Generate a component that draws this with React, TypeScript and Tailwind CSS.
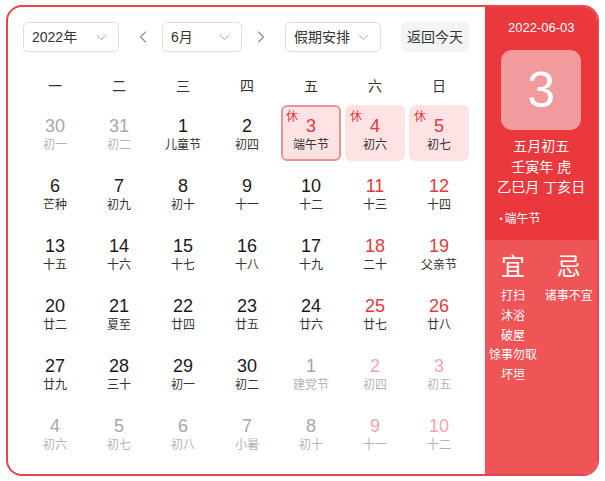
import { ChevronDown, ChevronLeft, ChevronRight } from "lucide-react";

type Day = {
  day: number;
  lunar: string;
  other?: boolean;
  rest?: boolean;
  selected?: boolean;
};

const days: Day[] = [
  { day: 30, lunar: "初一", other: true },
  { day: 31, lunar: "初二", other: true },
  { day: 1, lunar: "儿童节" },
  { day: 2, lunar: "初四" },
  { day: 3, lunar: "端午节", rest: true, selected: true },
  { day: 4, lunar: "初六", rest: true },
  { day: 5, lunar: "初七", rest: true },
  { day: 6, lunar: "芒种" },
  { day: 7, lunar: "初九" },
  { day: 8, lunar: "初十" },
  { day: 9, lunar: "十一" },
  { day: 10, lunar: "十二" },
  { day: 11, lunar: "十三" },
  { day: 12, lunar: "十四" },
  { day: 13, lunar: "十五" },
  { day: 14, lunar: "十六" },
  { day: 15, lunar: "十七" },
  { day: 16, lunar: "十八" },
  { day: 17, lunar: "十九" },
  { day: 18, lunar: "二十" },
  { day: 19, lunar: "父亲节" },
  { day: 20, lunar: "廿二" },
  { day: 21, lunar: "夏至" },
  { day: 22, lunar: "廿四" },
  { day: 23, lunar: "廿五" },
  { day: 24, lunar: "廿六" },
  { day: 25, lunar: "廿七" },
  { day: 26, lunar: "廿八" },
  { day: 27, lunar: "廿九" },
  { day: 28, lunar: "三十" },
  { day: 29, lunar: "初一" },
  { day: 30, lunar: "初二" },
  { day: 1, lunar: "建党节", other: true },
  { day: 2, lunar: "初四", other: true },
  { day: 3, lunar: "初五", other: true },
  { day: 4, lunar: "初六", other: true },
  { day: 5, lunar: "初七", other: true },
  { day: 6, lunar: "初八", other: true },
  { day: 7, lunar: "小暑", other: true },
  { day: 8, lunar: "初十", other: true },
  { day: 9, lunar: "十一", other: true },
  { day: 10, lunar: "十二", other: true },
];

const weekdays = ["一", "二", "三", "四", "五", "六", "日"];

const good = ["打扫", "沐浴", "破屋", "馀事勿取", "坏垣"];

function Select({ label, width }: { label: string; width: string }) {
  return (
    <div
      className={`flex h-[30px] items-center justify-between rounded-[5px] border border-[#dcdfe6] bg-white pl-[8px] pr-[8px] text-[14px] text-[#333] ${width}`}
    >
      <span>{label}</span>
      <ChevronDown size={17} strokeWidth={1.4} color="#a0a4ab" />
    </div>
  );
}

function DayCell({ item, index }: { item: Day; index: number }) {
  const weekend = index % 7 >= 5;
  let numColor = "text-[#1a1a1a]";
  let lunarColor = "text-[#333]";
  if (item.other) {
    numColor = weekend ? "text-[#f2a6ac]" : "text-[#a8a8a8]";
    lunarColor = "text-[#b4b4b4]";
  } else if (weekend || item.rest) {
    numColor = "text-[#e33a3e]";
  }

  let box = "border-2 border-transparent";
  if (item.selected) box = "border-2 border-[#ee9294] bg-[#fde3e4]";
  else if (item.rest) box = "border-2 border-transparent bg-[#fde3e4]";

  return (
    <div
      className={`relative mx-[2px] flex h-[56px] flex-col items-center rounded-[6px] pt-[8px] ${box}`}
    >
      {item.rest && (
        <span className="absolute left-[3px] top-[2px] text-[12px] leading-[16px] text-[#e33a3e]">
          休
        </span>
      )}
      <span className={`text-[18px] leading-[22px] ${numColor}`}>{item.day}</span>
      <span className={`text-[12px] leading-[16px] ${lunarColor}`}>{item.lunar}</span>
    </div>
  );
}

export default function App() {
  return (
    <div
      className="pl-[6px] pt-[5px]"
      style={{ fontFamily: '"Liberation Sans", "Noto Sans CJK SC", sans-serif' }}
    >
      <div className="flex h-[471px] w-[593px] overflow-hidden rounded-[16px] border-2 border-[#e2474b] bg-white">
        <div className="w-[479px] pl-[15px] pt-[15px]">
          <div className="flex h-[30px] items-center">
            <Select label="2022年" width="w-[96px]" />
            <div className="ml-[12px] mr-[7px] flex w-[24px] justify-center">
              <ChevronLeft size={20} strokeWidth={1.4} color="#8a8e96" />
            </div>
            <Select label="6月" width="w-[80px]" />
            <div className="ml-[7px] mr-[12px] flex w-[24px] justify-center">
              <ChevronRight size={20} strokeWidth={1.4} color="#8a8e96" />
            </div>
            <Select label="假期安排" width="w-[96px]" />
            <button className="ml-[20px] h-[30px] w-[68px] rounded-[5px] bg-[#f3f4f6] text-[14px] text-[#333]">
              返回今天
            </button>
          </div>

          <div className="mt-[17px] grid h-[34px] w-[448px] grid-cols-7 items-center">
            {weekdays.map((w) => (
              <div key={w} className="text-center text-[14px] text-[#333]">
                {w}
              </div>
            ))}
          </div>

          <div className="mt-[2px] grid w-[448px] grid-cols-7 gap-y-[4px]">
            {days.map((d, i) => (
              <DayCell key={i} item={d} index={i} />
            ))}
          </div>
        </div>

        <div className="flex w-[112px] flex-col text-white">
          <div className="flex h-[233px] flex-col items-center bg-[#ea383c] pt-[12px]">
            <div className="text-[13px] leading-[18px]">2022-06-03</div>
            <div className="mt-[13px] flex h-[80px] w-[80px] items-center justify-center rounded-[11px] bg-[#f29b9c] text-[50px] leading-none">
              3
            </div>
            <div className="mt-[6px] text-[14px] leading-[20.5px]">五月初五</div>
            <div className="text-[14px] leading-[20.5px]">壬寅年 虎</div>
            <div className="text-[14px] leading-[20.5px]">乙巳月 丁亥日</div>
            <div className="mt-[13px] flex w-full items-center gap-[2px] pl-[14px] text-[12px] leading-[16px]">
              <span className="text-[9px]">•</span>
              <span>端午节</span>
            </div>
          </div>
          <div className="flex flex-1 bg-[#ef5457] pt-[12px]">
            <div className="flex w-[55px] flex-col items-center">
              <div className="text-[24px] leading-[30px]">宜</div>
              <div className="mt-[5px] flex flex-col items-center">
                {good.map((g) => (
                  <div key={g} className="whitespace-nowrap text-[12px] leading-[19.8px]">
                    {g}
                  </div>
                ))}
              </div>
            </div>
            <div className="flex flex-1 flex-col items-center">
              <div className="text-[24px] leading-[30px]">忌</div>
              <div className="mt-[5px] whitespace-nowrap text-[12px] leading-[19.8px]">诸事不宜</div>
            </div>
          </div>
        </div>
      </div>
    </div>
  );
}
